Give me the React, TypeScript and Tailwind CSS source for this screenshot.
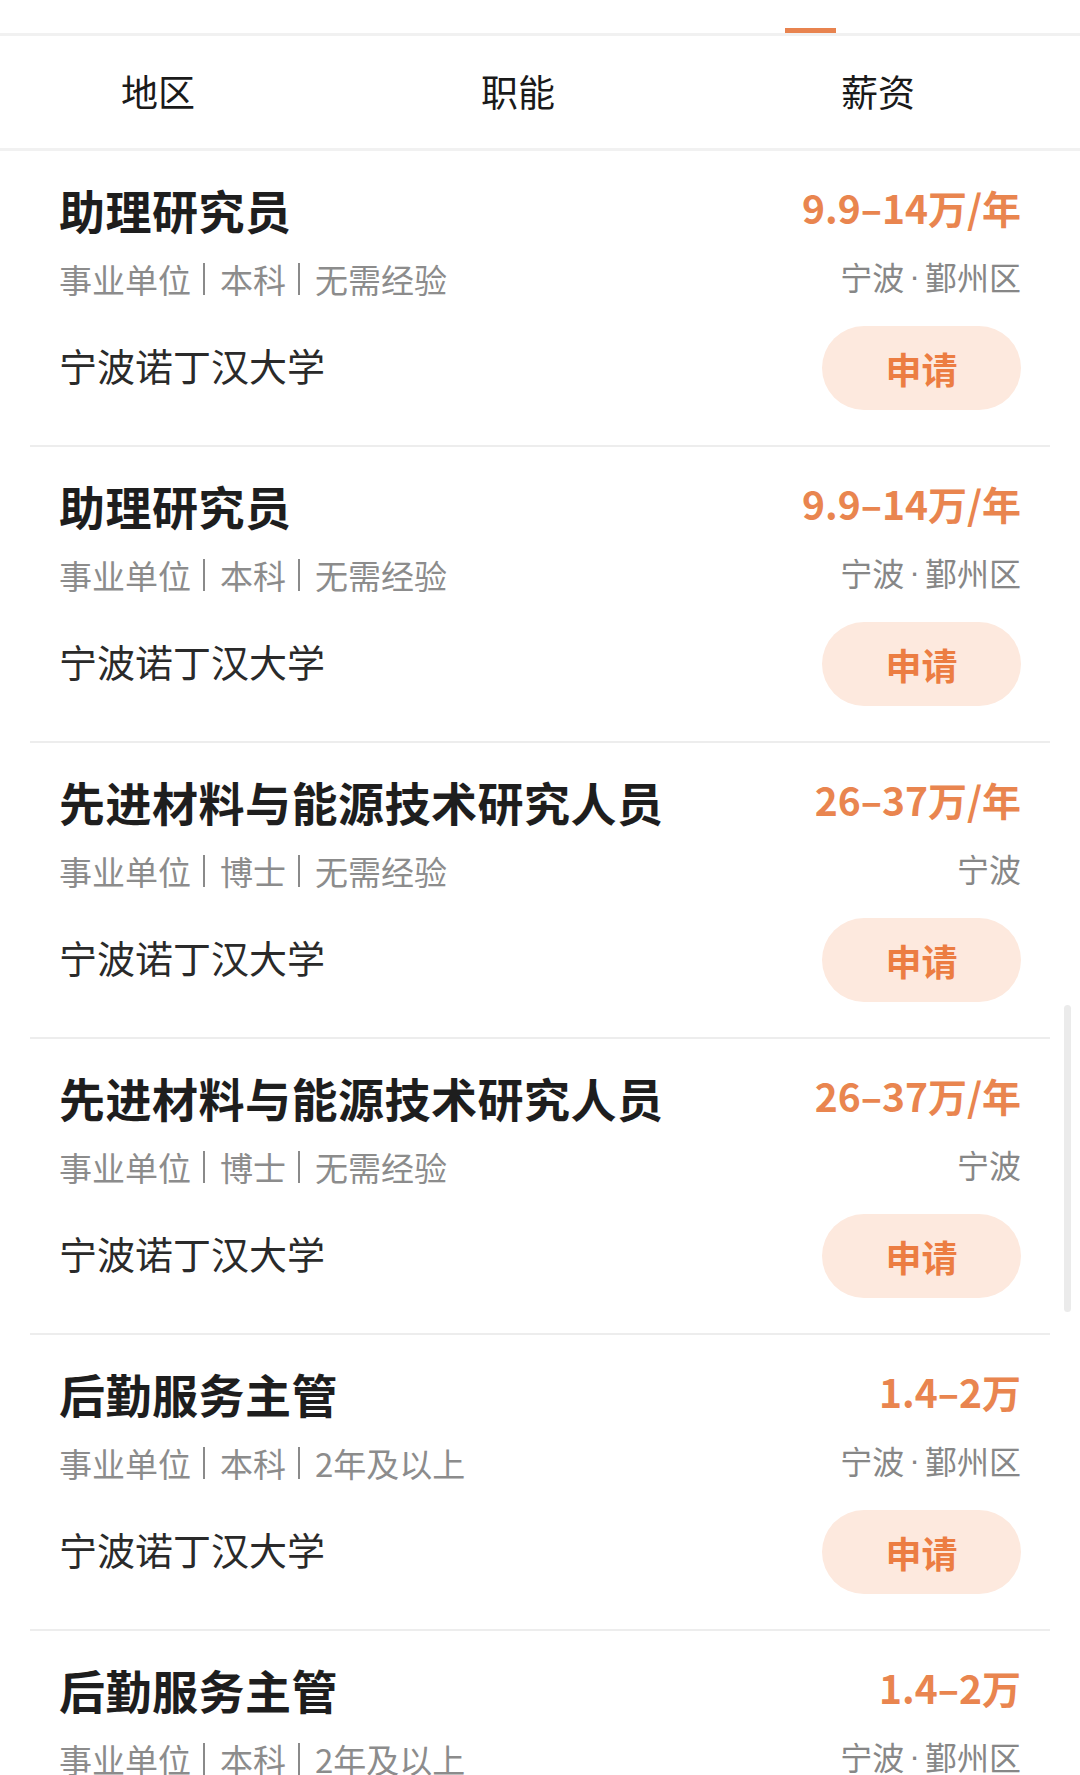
import React from "react";

type Job = {
  title: string;
  salary: string;
  tags: string[];
  location: string[];
  company: string;
};

const jobs: Job[] = [
  { title: "助理研究员", salary: "9.9–14万/年", tags: ["事业单位", "本科", "无需经验"], location: ["宁波", "鄞州区"], company: "宁波诺丁汉大学" },
  { title: "助理研究员", salary: "9.9–14万/年", tags: ["事业单位", "本科", "无需经验"], location: ["宁波", "鄞州区"], company: "宁波诺丁汉大学" },
  { title: "先进材料与能源技术研究人员", salary: "26–37万/年", tags: ["事业单位", "博士", "无需经验"], location: ["宁波"], company: "宁波诺丁汉大学" },
  { title: "先进材料与能源技术研究人员", salary: "26–37万/年", tags: ["事业单位", "博士", "无需经验"], location: ["宁波"], company: "宁波诺丁汉大学" },
  { title: "后勤服务主管", salary: "1.4–2万", tags: ["事业单位", "本科", "2年及以上"], location: ["宁波", "鄞州区"], company: "宁波诺丁汉大学" },
  { title: "后勤服务主管", salary: "1.4–2万", tags: ["事业单位", "本科", "2年及以上"], location: ["宁波", "鄞州区"], company: "宁波诺丁汉大学" },
];

function JobCard({ job }: { job: Job }) {
  return (
    <div className="h-[296px] shrink-0 border-b-2 border-[#ededed] px-[29px] flex justify-between">
      <div className="flex flex-col pt-[26px]">
        <div className="h-[64px] leading-[64px] text-[46px] font-bold text-[#1e1e1e] whitespace-nowrap tracking-[0.5px]">
          {job.title}
        </div>
        <div className="mt-[16px] h-[44px] leading-[44px] text-[33px] text-[#8c8c8c] whitespace-nowrap flex items-center">
          {job.tags.map((t, i) => (
            <React.Fragment key={i}>
              {i > 0 && <span className="ml-[12px] mr-[15px] inline-block w-[2px] h-[32px] bg-[#8a8a8a]" />}
              <span>{t}</span>
            </React.Fragment>
          ))}
        </div>
        <div className="mt-[22px] h-[83px] flex items-center text-[38px] text-[#2a2a2a] whitespace-nowrap">
          {job.company}
        </div>
      </div>
      <div className="flex flex-col items-end pt-[30px]">
        <div className="h-[52px] leading-[52px] text-[39px] font-semibold text-[#e9854f] whitespace-nowrap">
          {job.salary}
        </div>
        <div className="mt-[21px] h-[44px] leading-[44px] text-[32px] text-[#878787] whitespace-nowrap flex items-center">
          {job.location.map((l, i) => (
            <React.Fragment key={i}>
              {i > 0 && (
                <span className="mx-[5px] text-[32px]" style={{ fontFamily: '"Liberation Sans", sans-serif' }}>
                  ·
                </span>
              )}
              <span>{l}</span>
            </React.Fragment>
          ))}
        </div>
        <div className="mt-[28px] w-[199px] h-[84px] rounded-full bg-[#fde9de] flex items-center justify-center text-[36px] font-bold text-[#ec7d42]">
          申请
        </div>
      </div>
    </div>
  );
}

export default function App() {
  return (
    <div
      className="relative w-[1080px] h-[1775px] overflow-hidden bg-white"
      style={{ fontFamily: '"Noto Sans CJK SC", "Noto Sans", sans-serif' }}
    >
      <div className="h-[33px] pl-[785px] flex items-end">
        <div className="w-[51px] h-[5px] bg-[#e8834f]" />
      </div>
      <div className="h-[3px] bg-[#f1f1f1]" />
      <div className="h-[112px] grid grid-cols-3 items-center">
        {["地区", "职能", "薪资"].map((t) => (
          <div key={t} className="pr-[44px] text-center text-[37px] text-[#1a1a1a]">
            {t}
          </div>
        ))}
      </div>
      <div className="h-[3px] bg-[#f1f1f1]" />
      <div className="mx-[30px] flex flex-col">
        {jobs.map((j, i) => (
          <JobCard key={i} job={j} />
        ))}
      </div>
      <div className="absolute left-[1064px] top-[1005px] w-[7px] h-[307px] rounded-full bg-[#ebebeb]" />
    </div>
  );
}
